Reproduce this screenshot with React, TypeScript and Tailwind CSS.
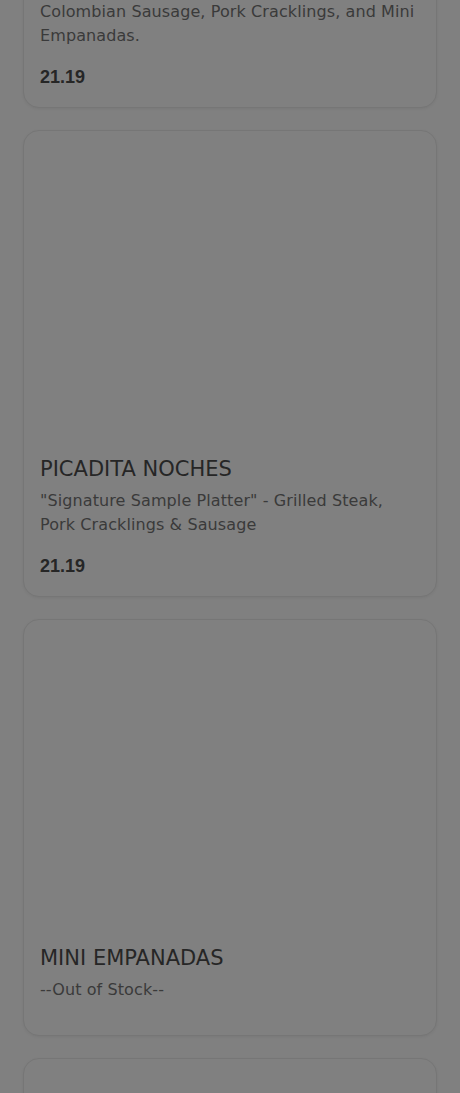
import React from "react";

type Item = { title: string; desc: string; price?: string };

const items: Item[] = [
  {
    title: "PICADA FAMILIAR",
    desc: "Colombian Sausage, Pork Cracklings, and Mini Empanadas.",
    price: "21.19",
  },
  {
    title: "PICADITA NOCHES",
    desc: '"Signature Sample Platter" - Grilled Steak, Pork Cracklings & Sausage',
    price: "21.19",
  },
  {
    title: "MINI EMPANADAS",
    desc: "--Out of Stock--",
  },
  {
    title: "EMPANADAS",
    desc: "Crispy corn turnovers filled with beef and potato.",
    price: "9.99",
  },
];

function Card({ item }: { item: Item }) {
  return (
    <div className="flex flex-col rounded-2xl border border-[#767676] bg-[#808080] shadow-[0_1px_3px_rgba(0,0,0,0.06)]">
      <div className="h-[308px] rounded-t-2xl" />
      <div className="flex flex-col px-4 pt-4 pb-4">
        <h3 className="text-[21px] leading-[28px] font-medium text-[#262626]">
          {item.title}
        </h3>
        <p className="mt-[6px] text-[16px] leading-[24px] tracking-[0.1px] text-[#3a3a3a]">
          {item.desc}
        </p>
        {item.price ? (
          <div
            className="mt-[15px] text-[18px] leading-[28px] font-bold text-[#262626]"
            style={{ fontFamily: '"Liberation Sans", Arial, sans-serif' }}
          >
            {item.price}
          </div>
        ) : (
          <div className="h-[17px]" />
        )}
      </div>
    </div>
  );
}

export default function App() {
  return (
    <div
      className="min-h-screen overflow-hidden bg-[#808080]"
      style={{ fontFamily: '"DejaVu Sans", "Open Sans", sans-serif' }}
    >
      <div className="-mt-[359px] flex flex-col gap-[22px] px-[23px]">
        {items.map((it, i) => (
          <Card key={i} item={it} />
        ))}
      </div>
    </div>
  );
}
